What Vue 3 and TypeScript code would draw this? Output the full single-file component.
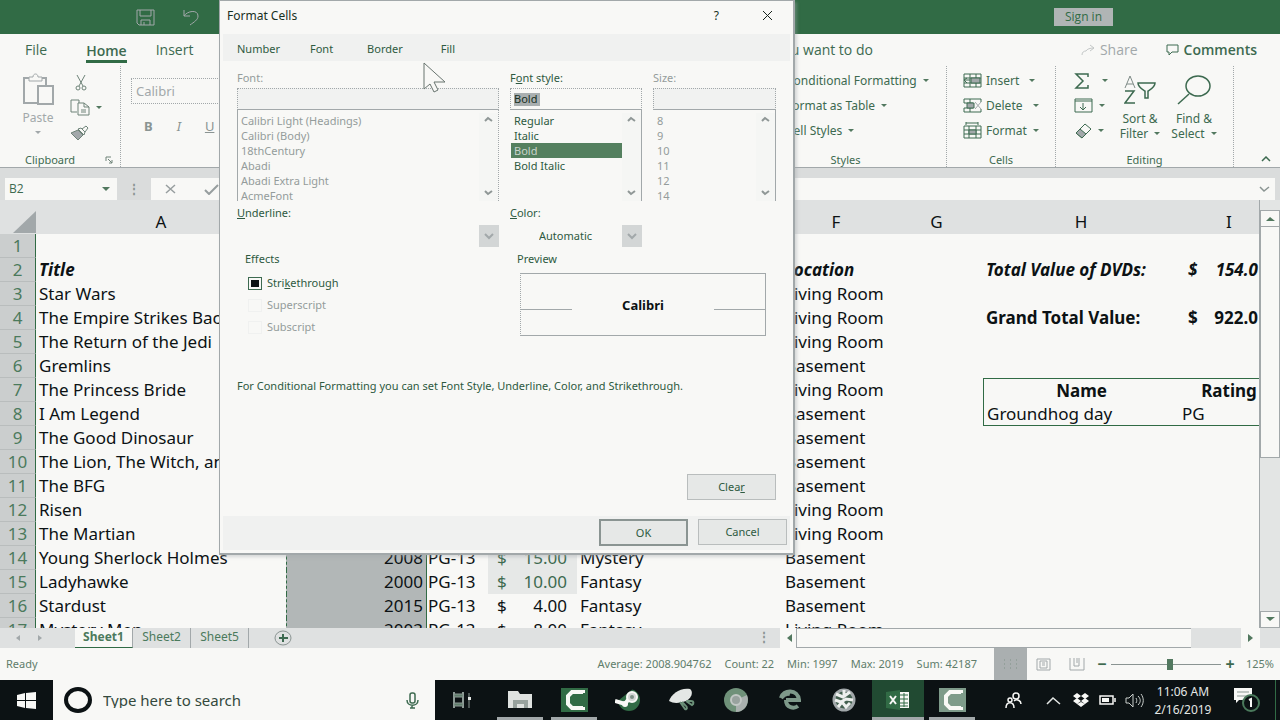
<script setup lang="ts">
import { ref, onMounted } from 'vue'

interface Row {
  n: number
  title?: string
  year?: string
  rating?: string
  price?: string
  genre?: string
  place?: string
  label?: string
  value?: string
  kind?: string
}

const columns = ['A', 'B', 'C', 'D', 'E', 'F', 'G', 'H', 'I']

const rows: Row[] = [
  { n: 1 },
  { n: 2, title: 'Title', place: 'Location', label: 'Total Value of DVDs:', value: '154.0', kind: 'head' },
  { n: 3, title: 'Star Wars', place: 'Living Room' },
  { n: 4, title: 'The Empire Strikes Back', place: 'Living Room', label: 'Grand Total Value:', value: '922.0', kind: 'total' },
  { n: 5, title: 'The Return of the Jedi', place: 'Living Room' },
  { n: 6, title: 'Gremlins', place: 'Basement' },
  { n: 7, title: 'The Princess Bride', place: 'Living Room', label: 'Name', kind: 'name' },
  { n: 8, title: 'I Am Legend', place: 'Basement', label: 'Groundhog day', kind: 'film' },
  { n: 9, title: 'The Good Dinosaur', place: 'Basement' },
  { n: 10, title: 'The Lion, The Witch, and', place: 'Basement' },
  { n: 11, title: 'The BFG', place: 'Basement' },
  { n: 12, title: 'Risen', place: 'Living Room' },
  { n: 13, title: 'The Martian', place: 'Living Room' },
  { n: 14, title: 'Young Sherlock Holmes', year: '2008', rating: 'PG-13', price: '15.00', genre: 'Mystery', place: 'Basement', kind: 'shade' },
  { n: 15, title: 'Ladyhawke', year: '2000', rating: 'PG-13', price: '10.00', genre: 'Fantasy', place: 'Basement', kind: 'shade' },
  { n: 16, title: 'Stardust', year: '2015', rating: 'PG-13', price: '4.00', genre: 'Fantasy', place: 'Basement' },
  { n: 17, title: 'Mystery Men', year: '2003', rating: 'PG-13', price: '8.00', genre: 'Fantasy', place: 'Living Room' },
]

const fonts = ['Calibri Light (Headings)', 'Calibri (Body)', '18thCentury', 'Abadi', 'Abadi Extra Light', 'AcmeFont']
const styles = ['Regular', 'Italic', 'Bold', 'Bold Italic']
const sizes = ['8', '9', '10', '11', '12', '14']
const dialogTabs = ['Number', 'Font', 'Border', 'Fill']
const stats = ['Average: 2008.904762', 'Count: 22', 'Min: 1997', 'Max: 2019', 'Sum: 42187']

const activeTab = ref('Font')
const style = ref('Bold')
const zoom = ref(54)
const strike = ref<HTMLInputElement | null>(null)

onMounted(() => {
  if (strike.value) strike.value.indeterminate = true
})
</script>

<template>
  <div class="screen">
    <header class="titlebar">
      <svg class="save" width="19" height="17" viewBox="0 0 19 17"><path d="M1 1h17v15H3l-2-2zM4 1v6h11V1M5 16v-5h9v5M8 13v3" /></svg>
      <svg class="undo" width="17" height="17" viewBox="0 0 17 17"><path d="M1 1v6h6M1 7c3-5 14-7 14 0 0 4-4 6-8 9" /></svg>
      <button class="signin" type="button">Sign in</button>
    </header>

    <nav class="tabs">
      <a href="#" class="t-file">File</a>
      <a href="#" class="t-home">Home</a>
      <a href="#" class="t-insert">Insert</a>
      <a href="#" class="t-tell">Tell me what you want to do</a>
      <button class="share" type="button">
        <svg width="14" height="12" viewBox="0 0 14 12"><path d="M1 11c0-3 2-4 4-4M9 1l4 3-4 3M5 7c1-2 4-3 8-3" /></svg>Share
      </button>
      <button class="comments" type="button">
        <svg width="13" height="12" viewBox="0 0 13 12"><path d="M1 1h11v7H6l-3 3V8H1z" /></svg>Comments
      </button>
    </nav>

    <section class="ribbon">
      <div class="group clip">
        <div class="body">
          <button class="paste" type="button">
            <svg width="32" height="32" viewBox="0 0 32 32"><path d="M7 5H2v25h13M20 5h4v7" stroke-width="2" /><path d="M7 8V4h4c0-4 5-4 5 0h4v4z" /><path d="M16 13h15v18H16z" stroke-width="2" fill="#f8f8f6" /></svg>
            <span>Paste</span>
            <i class="caret"></i>
          </button>
          <div class="stack">
            <button type="button" class="cut" aria-label="Cut"><svg width="14" height="17" viewBox="0 0 14 17"><path d="M3 1l6 11M11 1L5 12" /><circle cx="4" cy="14" r="2" /><circle cx="10" cy="14" r="2" /></svg></button>
            <button type="button" aria-label="Copy"><svg width="20" height="17" viewBox="0 0 20 17"><path d="M7 13H1V1h8v3" /><path d="M8 4h6l5 4v8H8zM14 4v4h5M11 11h5M11 13h5" /></svg><i class="caret"></i></button>
            <button type="button" aria-label="Format Painter"><svg width="19" height="16" viewBox="0 0 19 16"><path d="M1 8l7-3 5 5-5 5z" fill="#a2a8aa" /><path d="M8 4l6 6 1-3-4-4zM12 4l4-3 2 2-3 4" /></svg></button>
          </div>
        </div>
        <div class="caption">Clipboard<svg class="launch" width="8" height="8" viewBox="0 0 8 8"><path d="M1 5V1h5M3 3l4 4M7 4v3H4" /></svg></div>
      </div>

      <div class="group fontgroup">
        <input class="fontname" type="text" value="Calibri" aria-label="Font" />
        <div class="biu"><button type="button"><b>B</b></button><button type="button"><em>I</em></button><button type="button"><u>U</u></button></div>
      </div>

      <div class="group stylegroup">
        <div class="list">
          <button type="button">Conditional Formatting<i class="caret"></i></button>
          <button type="button">Format as Table<i class="caret"></i></button>
          <button type="button">Cell Styles<i class="caret"></i></button>
        </div>
        <div class="caption">Styles</div>
      </div>

      <div class="group cellgroup">
        <div class="list">
          <button type="button"><svg width="19" height="15" viewBox="0 0 19 15"><path d="M1 1h17v13H1zM1 5h17M1 10h17M7 1v13M13 1v13" /><path d="M8 5h9v5H8z" fill="#a2a8aa" /><path d="M7 7H1M4 5L1 7l3 3" /></svg>Insert<i class="caret wide"></i></button>
          <button type="button"><svg width="19" height="15" viewBox="0 0 19 15"><path d="M1 1h17M1 14h17M1 5h9M1 10h9M1 1v4M7 1v4M7 10v4M18 1v3M18 11v3M1 10v4" /><path d="M4 5h7v5H4z" fill="#a2a8aa" /><path d="M12 4l6 7M18 4l-6 7" stroke="#a2a8aa" /></svg>Delete<i class="caret wide"></i></button>
          <button type="button"><svg width="19" height="17" viewBox="0 0 19 17"><path d="M1 4h17v12H1zM1 8h17M1 12h17M6 4v12M13 4v12M3 1h12M3 0v3M15 0v3" /><path d="M6 8h7v4H6z" fill="#a2a8aa" /></svg>Format<i class="caret"></i></button>
        </div>
        <div class="caption">Cells</div>
      </div>

      <div class="group editgroup">
        <div class="body">
          <div class="stack">
            <button type="button" aria-label="AutoSum"><svg width="18" height="16" viewBox="0 0 18 16"><path d="M14 4V1H2l7 7-7 7h12v-3" stroke-width="1.500" /></svg><i class="caret wide"></i></button>
            <button type="button" aria-label="Fill"><svg width="19" height="15" viewBox="0 0 19 15"><path d="M1 1h17v13H1zM1 3h17M9 5v7M6 9l3 3 3-3" /></svg><i class="caret"></i></button>
            <button type="button" aria-label="Clear"><svg width="18" height="16" viewBox="0 0 18 16"><path d="M11 1l6 5-9 9-6-5z" /><path d="M6 6l6 5-4 4-6-5z" fill="#a2a8aa" /></svg><i class="caret"></i></button>
          </div>
          <button class="big" type="button">
            <svg width="32" height="30" viewBox="0 0 32 30"><path d="M1 13L6 1l5 12M3 9h6" stroke="#7f8b87" /><path d="M1 16h9L1 28h10" stroke-width="1.500" /><path d="M14 8h17c0 4-4 6-7 8v7h-3v-7c-3-2-7-4-7-8z" stroke-width="1.500" /></svg>
            <span>Sort &amp;</span><span>Filter<i class="caret"></i></span>
          </button>
          <button class="big" type="button">
            <svg width="34" height="30" viewBox="0 0 34 30"><ellipse cx="21" cy="11" rx="12" ry="10" stroke-width="1.500" /><path d="M12 19L1 29" stroke-width="1.500" /></svg>
            <span>Find &amp;</span><span>Select<i class="caret"></i></span>
          </button>
        </div>
        <div class="caption">Editing</div>
      </div>
      <button class="collapse" type="button" aria-label="Collapse ribbon"><svg width="10" height="6" viewBox="0 0 10 6"><path d="M1 5l4-4 4 4" stroke-width="1.500" /></svg></button>
    </section>

    <section class="formula">
      <div class="namebox"><input type="text" value="B2" aria-label="Name box" /><i class="caret big-caret"></i></div>
      <span class="grip">⋮</span>
      <div class="fx">
        <svg width="11" height="10" viewBox="0 0 11 10"><path d="M1 1l9 8M10 1L1 9" stroke="#979e9f" stroke-width="1.500" /></svg>
        <svg width="15" height="11" viewBox="0 0 15 11"><path d="M1 6l4 4 9-9" stroke="#979e9f" stroke-width="2" /></svg>
        <input type="text" aria-label="Formula" />
        <svg width="11" height="7" viewBox="0 0 11 7"><path d="M1 1l4 4 5-4" stroke="#8a9492" stroke-width="1.500" /></svg>
      </div>
    </section>

    <main class="sheet">
      <div class="gridwrap">
        <table class="grid">
          <colgroup>
            <col class="c-n" /><col class="c-a" /><col class="c-b" /><col class="c-c" /><col class="c-d" /><col class="c-e" /><col class="c-f" /><col class="c-g" /><col class="c-h" /><col class="c-i" />
          </colgroup>
          <thead>
            <tr><th><svg width="23" height="22" viewBox="0 0 23 22"><path d="M23 0v22H0z" fill="#a2a8aa" stroke="none" /></svg></th><th v-for="c in columns" :key="c">{{ c }}</th></tr>
          </thead>
          <tbody>
            <tr v-for="r in rows" :key="r.n" :class="r.kind">
              <th>{{ r.n }}</th>
              <td>{{ r.title }}</td>
              <td class="sel">{{ r.year }}</td>
              <td>{{ r.rating }}</td>
              <td class="price"><div v-if="r.price"><span>$</span><span>{{ r.price }}</span></div></td>
              <td>{{ r.genre }}</td>
              <td>{{ r.place }}</td>
              <td></td>
              <td class="h">{{ r.label }}</td>
              <td class="i"><div v-if="r.value"><span>$</span><span>{{ r.value }}</span></div><template v-if="r.kind === 'name'">Rating</template><template v-if="r.kind === 'film'">PG</template></td>
            </tr>
          </tbody>
        </table>
      </div>
      <div class="vscroll">
        <button type="button" aria-label="Scroll up"><svg width="9" height="5" viewBox="0 0 9 5"><path d="M0 5l4-4 5 4z" fill="#52785f" stroke="none" /></svg></button>
        <div class="thumb"></div>
        <div class="track"></div>
        <button type="button" aria-label="Scroll down"><svg width="9" height="5" viewBox="0 0 9 5"><path d="M0 0h9L4 4z" fill="#52785f" stroke="none" /></svg></button>
      </div>
    </main>

    <div class="sheetbar">
      <span class="arrows"><svg width="5" height="6" viewBox="0 0 5 6"><path d="M4 0v6L0 3z" fill="#a2a8aa" stroke="none" /></svg><svg width="5" height="6" viewBox="0 0 5 6"><path d="M0 0v6l4-3z" fill="#a2a8aa" stroke="none" /></svg></span>
      <a href="#" class="on">Sheet1</a><a href="#">Sheet2</a><a href="#">Sheet5</a>
      <button class="add" type="button" aria-label="New sheet"><svg width="19" height="17" viewBox="0 0 19 17"><ellipse cx="9" cy="8" rx="8" ry="7" stroke="#8a9492" /><path d="M5 8h9M9 4v8" stroke-width="2" /></svg></button>
      <span class="dots">⋮</span>
      <div class="hscroll">
        <svg width="5" height="8" viewBox="0 0 5 8"><path d="M5 0v8L0 4z" fill="#52785f" stroke="none" /></svg>
        <div class="hthumb"></div><div class="htrack"></div>
        <svg width="5" height="8" viewBox="0 0 5 8"><path d="M0 0v8l5-4z" fill="#52785f" stroke="none" /></svg>
      </div>
    </div>

    <footer class="status">
      <span class="ready">Ready</span>
      <span v-for="s in stats" :key="s" class="stat">{{ s }}</span>
      <button class="view current" type="button" aria-label="Normal"><svg width="15" height="11" viewBox="0 0 15 11"><path d="M1 1h13M1 5h13M1 9h13" stroke="#7f9186" stroke-dasharray="1 5" /></svg></button>
      <button class="view" type="button" aria-label="Page layout"><svg width="15" height="13" viewBox="0 0 15 13"><path d="M1 1h13v11H1zM4 3h7v7H4zM6 5h3M6 7h3" /></svg></button>
      <button class="view" type="button" aria-label="Page break"><svg width="16" height="13" viewBox="0 0 16 13"><path d="M1 0v12h14V0M5 0v8h5V0M8 0v5" /></svg></button>
      <span class="pm minus">−</span>
      <input v-model="zoom" class="zoom" type="range" min="0" max="100" aria-label="Zoom" />
      <span class="pm">+</span>
      <span class="pct">125%</span>
    </footer>

    <footer class="taskbar">
      <button class="start" type="button" aria-label="Start"><svg width="19" height="17" viewBox="0 0 19 17"><path d="M0 3l8-2v7H0zM9 1l10-1v8H9zM0 9h8v7l-8-2zM9 9h10v8L9 16z" fill="#f8f8f6" stroke="none" /></svg></button>
      <label class="search">
        <svg width="28" height="26" viewBox="0 0 28 26"><ellipse cx="14" cy="13" rx="12" ry="11" stroke="#0c1214" stroke-width="4" /></svg>
        <input type="text" placeholder="Type here to search" />
        <svg width="13" height="17" viewBox="0 0 13 17"><rect x="4" y="1" width="5" height="10" rx="2" stroke-width="1.500" /><path d="M1 8c0 7 11 7 11 0M6 13v3M4 16h5" stroke-width="1.500" /></svg>
      </label>
      <div class="app first"><svg width="20" height="16" viewBox="0 0 20 16"><path d="M2 0v16M11 0v16" stroke="#8d9a95" stroke-width="2" /><path d="M2 2h9v3H2zM2 11h9v3H2z" fill="#5f7d6b" stroke="#8d9a95" /><path d="M17 1v15" stroke="#8d9a95" /><path d="M16 5h3v3h-3z" fill="#e4e7e5" stroke="none" /></svg></div>
      <div class="app run"><svg width="25" height="20" viewBox="0 0 25 20"><path d="M0 1h10l2 3h12v14H0z" fill="#dfe2e0" stroke="none" /><path d="M5 18v-8h15v8h-4v-4H9v4z" fill="#98a29e" stroke="none" /></svg></div>
      <div class="app run"><svg width="27" height="24" viewBox="0 0 27 24"><path d="M0 0h27v24H0z" fill="#316b45" stroke="none" /><path d="M22 5V4H11L7 8v8l4 4h11v-1" stroke="#f8f8f6" stroke-width="4" /></svg></div>
      <div class="app"><svg width="26" height="24" viewBox="0 0 26 24"><circle cx="14" cy="12" r="11" fill="#316b45" stroke="none" /><path d="M0 0h19L4 12H0z" fill="#0c1214" stroke="none" /><path d="M0 13l10 3 6-8" stroke="#f8f8f6" stroke-width="4" /><circle cx="17" cy="9" r="5" fill="#d2d6d4" stroke="#f8f8f6" stroke-width="2" /><circle cx="17" cy="9" r="2" fill="#7b8f85" stroke="none" /><circle cx="10" cy="16" r="3" fill="#f8f8f6" stroke="none" /></svg></div>
      <div class="app"><svg width="26" height="24" viewBox="0 0 26 24"><path d="M0 13C2 6 12-1 21 1c4 3 1 10-4 12-6 2-12 3-17 0z" fill="#e4e7e5" stroke="none" /><path d="M11 14l5 7c2 1 3-2 0-4l-3-3M17 13l6 4c2-1 2-4-1-4h-4" stroke="#6c9179" stroke-width="2" /></svg></div>
      <div class="app"><svg width="26" height="24" viewBox="0 0 26 24"><circle cx="13" cy="12" r="12" fill="#6f9179" stroke="none" /><path d="M13 12l11-5c3 8-2 17-11 17z" fill="#a9b0ae" stroke="none" /><circle cx="13" cy="12" r="5" fill="#98a29e" stroke="#c2c8c5" stroke-width="2" /></svg></div>
      <div class="app"><svg width="22" height="22" viewBox="0 0 22 22"><path d="M2 9c2-9 17-9 18 2H7M2 9c3-4 6-5 9-4M7 11c0 8 8 9 12 6" stroke="#7e998a" stroke-width="4" /></svg></div>
      <div class="app"><svg width="26" height="24" viewBox="0 0 26 24"><circle cx="13" cy="12" r="10" fill="#43604f" stroke="#a2a8aa" stroke-width="3" /><path d="M5 6l7 3 7-5M4 12l6 2 5-3 7 1M7 19l4-5 4 5 4-4M13 2v5" stroke="#eef0ee" stroke-width="3" /></svg></div>
      <div class="app run hot"><svg width="25" height="20" viewBox="0 0 25 20"><path d="M12 2h11v16H12z" fill="#f8f8f6" stroke="none" /><path d="M14 5h8M14 9h8M14 13h8M14 16h8M18 3v14" stroke="#316b45" /><path d="M0 2l14-2v20L0 18z" fill="#316b45" stroke="none" /><path d="M4 6l6 8M10 6l-6 8" stroke="#f8f8f6" stroke-width="2" /></svg></div>
      <div class="app run"><svg width="27" height="24" viewBox="0 0 27 24"><path d="M0 0h27v24H0z" fill="#7e9b8a" stroke="none" /><path d="M22 5V4H11L7 8v8l4 4h11v-1" stroke="#f8f8f6" stroke-width="4" /></svg></div>

      <div class="tray">
        <span class="people"><svg width="17" height="17" viewBox="0 0 17 17"><g stroke="#f8f8f6" stroke-width="1.500"><circle cx="5" cy="8" r="2" /><circle cx="11" cy="4" r="3" /><path d="M1 16c0-7 8-7 8 0M9 9c3-3 7 0 7 3" /></g></svg></span>
        <span><svg width="15" height="9" viewBox="0 0 15 9"><path d="M1 8l6-6 7 6" stroke="#e4e7e5" stroke-width="1.500" /></svg></span>
        <span><svg width="16" height="14" viewBox="0 0 16 14"><path d="M4 0l4 3-4 3-4-3zM12 0l4 3-4 3-4-3zM4 5l4 3-4 3-4-3zM12 5l4 3-4 3-4-3zM8 9l4 2-4 3-4-3z" fill="#f8f8f6" stroke="none" /></svg></span>
        <span><svg width="17" height="10" viewBox="0 0 17 10"><path d="M1 1h13v8H1zM16 3v4" stroke="#f8f8f6" stroke-width="1.500" /><path d="M3 3h7v4H3z" fill="#f8f8f6" stroke="none" /></svg></span>
        <span><svg width="19" height="15" viewBox="0 0 19 15"><path d="M1 5h3l4-4v13l-4-4H1zM11 5c1 2 1 3 0 5M13 3c3 3 3 6 0 9M16 1c3 4 3 9 0 13" stroke="#c9cecb" /></svg></span>
      </div>
      <div class="clock"><span>11:06 AM</span><span>2/16/2019</span></div>
      <div class="notify"><svg width="28" height="26" viewBox="0 0 28 26"><path d="M1 1h18v12H6l-3 3v-3H1z" fill="#f8f8f6" stroke="none" /><path d="M4 5h12M4 9h12" stroke="#8b9792" /><circle cx="18" cy="16" r="8" fill="#0c1214" stroke="#4a795b" stroke-width="2" /><path d="M16 13l2-1v8" stroke="#f8f8f6" stroke-width="2" /></svg></div>
    </footer>

    <div class="dialog" role="dialog" aria-label="Format Cells">
      <div class="dtitle"><span>Format Cells</span><button type="button">?</button><button type="button" aria-label="Close"><svg width="11" height="11" viewBox="0 0 11 11"><path d="M1 1l9 9M10 1l-9 9" stroke="#18241d" /></svg></button></div>
      <div class="dtabs"><button v-for="t in dialogTabs" :key="t" type="button" :class="{ on: t === activeTab }" @click="activeTab = t">{{ t }}</button></div>
      <div class="panel">
        <div class="pickers">
          <div class="pick off">
            <label for="f-font">Font:</label>
            <div class="field shaded"><input id="f-font" type="text" disabled /></div>
            <div class="listbox fonts"><ul><li v-for="f in fonts" :key="f">{{ f }}</li></ul><div class="lscroll"><svg width="9" height="6" viewBox="0 0 9 6"><path d="M1 5l3-3 4 3" /></svg><svg width="9" height="6" viewBox="0 0 9 6"><path d="M1 1l3 3 4-3" /></svg></div></div>
          </div>
          <div class="pick">
            <label for="f-style">F<u>o</u>nt style:</label>
            <div class="field"><input id="f-style" v-model="style" class="picked" type="text" /></div>
            <div class="listbox"><ul><li v-for="s in styles" :key="s" :class="{ on: s === style }" @click="style = s">{{ s }}</li></ul><div class="lscroll"><svg width="9" height="6" viewBox="0 0 9 6"><path d="M1 5l3-3 4 3" /></svg><svg width="9" height="6" viewBox="0 0 9 6"><path d="M1 1l3 3 4-3" /></svg></div></div>
          </div>
          <div class="pick off">
            <label for="f-size">Size:</label>
            <div class="field shaded"><input id="f-size" type="text" disabled /></div>
            <div class="listbox"><ul><li v-for="s in sizes" :key="s">{{ s }}</li></ul><div class="lscroll"><svg width="9" height="6" viewBox="0 0 9 6"><path d="M1 5l3-3 4 3" /></svg><svg width="9" height="6" viewBox="0 0 9 6"><path d="M1 1l3 3 4-3" /></svg></div></div>
          </div>
        </div>

        <div class="combos">
          <div class="combo">
            <label for="f-under"><u>U</u>nderline:</label>
            <div class="drop"><select id="f-under"><option></option></select><svg width="20" height="22" viewBox="0 0 20 22"><path d="M6 9l4 4 4-4" /></svg></div>
          </div>
          <div class="combo">
            <label for="f-color"><u>C</u>olor:</label>
            <div class="drop"><select id="f-color"><option>Automatic</option></select><svg width="20" height="22" viewBox="0 0 20 22"><path d="M6 9l4 4 4-4" /></svg></div>
          </div>
        </div>

        <div class="lower">
          <fieldset class="effects">
            <legend>Effects</legend>
            <label><input ref="strike" type="checkbox" /><span>Stri<u>k</u>ethrough</span></label>
            <label class="off"><input type="checkbox" disabled /><span>Superscript</span></label>
            <label class="off"><input type="checkbox" disabled /><span>Subscript</span></label>
          </fieldset>
          <div class="preview">
            <span>Preview</span>
            <div class="pbox"><i></i><b>Calibri</b><i></i></div>
          </div>
        </div>

        <p class="note">For Conditional Formatting you can set Font Style, Underline, Color, and Strikethrough.</p>
        <button class="btn clear" type="button"><span>Clea<u>r</u></span></button>
      </div>
      <div class="dfoot"><button class="btn ok" type="button">OK</button><button class="btn" type="button">Cancel</button></div>
    </div>

    <svg class="cursor" width="24" height="32" viewBox="0 0 24 32"><path d="M1 1v26l6-5 4 8 4-2-4-8h11z" fill="#f8f8f6" stroke="#68746f" /></svg>
  </div>
</template>

<style>
body { background: #f8f8f6; overflow: hidden; }
</style>

<style scoped>
* { box-sizing: border-box; }
.screen { position: relative; display: flex; flex-direction: column; height: 100vh; overflow: hidden; font: 13px/16px "Open Sans", "Noto Sans", sans-serif; color: #3d6a50; background: #f8f8f6; }
button { font: inherit; color: inherit; background: none; border: 0; padding: 0; display: flex; align-items: center; }
input, select { font: inherit; color: inherit; border: 0; background: none; padding: 0; min-width: 0; outline: 0; }
a { color: inherit; text-decoration: none; }
svg { fill: none; stroke: #3d6a50; flex: none; }
.caret { border: 3px solid transparent; border-top-color: #52785f; border-bottom: 0; margin-left: 6px; flex: none; }
.caret.wide { margin-left: 10px; }

.titlebar { flex: none; height: 34px; display: flex; align-items: center; background: #316b45; padding: 0 167px 0 136px; }
.titlebar svg { stroke: #a2a8aa; }
.undo { margin-left: 28px; }
.signin { margin-left: auto; width: 59px; height: 18px; justify-content: center; background: #b0b5b5; color: #316b45; font-size: 12px; }

.tabs { flex: none; height: 32px; display: flex; align-items: center; font-size: 14px; padding: 0 23px 0 25px; }
.t-home { margin-left: 39px; font-weight: 600; height: 26px; line-height: 28px; border-bottom: 3px solid #316b45; }
.t-home, .t-file, .t-insert { flex: none; }
.t-insert { margin-left: 29px; }
.t-tell { margin-left: auto; margin-right: 208px; }
.share { color: #a2a8aa; gap: 5px; }
.share svg { stroke: #c3c7c7; }
.comments { margin-left: 28px; gap: 5px; font-weight: 600; }

.ribbon { flex: none; height: 102px; display: flex; border-bottom: 1px solid #a2a8aa; font-family: "Noto Sans", "Open Sans", sans-serif; font-size: 12px; }
.group { display: flex; flex-direction: column; border-right: 1px dotted #a2a8aa; }
.caption { margin-top: auto; height: 14px; line-height: 14px; font-size: 11px; text-align: center; }
.body { display: flex; }
.list button, .stack button { height: 25px; }
.clip { width: 121px; flex: none; }
.clip .caption { display: flex; align-items: center; padding: 0 7px 0 25px; justify-content: space-between; }
.clip svg { stroke: #6e8378; }
.paste { width: 70px; padding: 7px 0 0 6px; flex-direction: column; gap: 5px; color: #a2a8aa; }
.paste svg { stroke: #a2a8aa; }
.paste .caret { border-top-color: #a2a8aa; margin: 0; }
.stack { padding-top: 4px; }
.cut { padding-left: 4px; }
.fontgroup { flex: 1; border: 0; padding: 12px 0 0 10px; gap: 13px; }
.fontname { width: 145px; height: 26px; border: 1px dotted #a2a8aa; padding-left: 4px; color: #a2a8aa; font-size: 13px; }
.biu { display: flex; gap: 24px; padding-left: 13px; font-size: 13px; line-height: 18px; color: #8a9492; }
.stylegroup { width: 202px; padding-top: 2px; }
.stylegroup .list { padding-left: 41px; }
.cellgroup { width: 109px; padding-top: 2px; }
.cellgroup .list { padding-left: 16px; }
.cellgroup .list svg { margin-right: 4px; }
.editgroup { width: 178px; padding-top: 2px; }
.editgroup .stack { padding: 0 0 0 18px; width: 57px; }
.big { width: 54px; flex-direction: column; padding-top: 7px; }
.big svg { margin-bottom: 6px; }
.big span { line-height: 15px; display: flex; align-items: center; }
.collapse { width: 46px; align-items: flex-end; justify-content: center; padding: 0 0 5px 18px; }

.formula { flex: none; height: 32px; display: flex; align-items: flex-end; padding: 0 5px; background: #dadcdc; font-size: 12px; }
.namebox { width: 112px; height: 22px; display: flex; align-items: center; background: #f8f8f6; padding: 0 7px 0 4px; }
.namebox input { flex: 1; }
.big-caret { border-width: 4px; border-bottom: 0; }
.grip, .dots { width: 34px; text-align: center; line-height: 22px; color: #8a9492; font-weight: 700; }
.fx { flex: 1; height: 22px; display: flex; align-items: center; background: #f8f8f6; padding: 0 5px 0 14px; gap: 28px; }
.fx input { flex: 1; }

.sheet { flex: 1; min-height: 0; display: flex; background: #e3e5e4; }
.gridwrap { flex: 1; min-width: 0; overflow: hidden; border-right: 1px solid #a2a8aa; }
.grid { table-layout: fixed; border-collapse: separate; border-spacing: 0; width: 1279px; font: 17px/24px "Noto Sans", "Open Sans", sans-serif; color: #0c1214; background: #f8f8f6; }
.c-n { width: 36px; } .c-a { width: 250px; } .c-b { width: 141px; } .c-c { width: 61px; } .c-d { width: 89px; }
.c-e { width: 205px; } .c-f { width: 108px; } .c-g { width: 93px; } .c-h { width: 196px; } .c-i { width: 100px; }
.grid th, .grid td { padding: 0 3px; height: 24px; white-space: nowrap; overflow: hidden; }
.grid thead th { height: 34px; padding-top: 10px; font-weight: 400; background: #dfe1e1; }
.grid thead th:first-child { padding: 0; text-align: right; vertical-align: bottom; }
.grid thead svg { display: block; margin: 0 0 1px auto; }
.grid tbody th { background: #cbcece; color: #4b7a5c; font-weight: 400; border-right: 1px solid #316b45; border-bottom: 1px solid #b9bdbd; line-height: 23px; }
.grid .sel { background: #b2b7b7; text-align: right; border-left: 1px dashed #316b45; border-right: 1px solid #316b45; }
.grid td:nth-child(4) { padding-left: 1px; }
.grid .price { padding: 0 10px 0 9px; }
.price div, .i div { display: flex; justify-content: space-between; }
.i div { padding: 0 18px 0 6px; }
.shade .price { color: #3d6a50; background: #e6e8e7; }
.head { font-weight: 700; font-style: italic; }
.total .h, .total .i, .name .h, .name .i { font-weight: 700; }
.head th { font-style: normal; }
.grid .name .h { text-align: center; border-top: 1px solid #316b45; border-left: 1px solid #316b45; line-height: 23px; }
.grid .name .i { text-align: center; border-top: 1px solid #316b45; line-height: 23px; }
.grid .film .h { border-left: 1px solid #316b45; border-bottom: 1px solid #316b45; line-height: 23px; }
.grid .film .i { border-bottom: 1px solid #316b45; line-height: 23px; }
.vscroll { width: 20px; padding-top: 10px; display: flex; flex-direction: column; }
.vscroll button { height: 17px; justify-content: center; background: #f8f8f6; border: 1px solid #a2a8aa; }
.thumb { flex: 6; background: #f8f8f6; border: 1px solid #a2a8aa; border-top: 0; }
.track { flex: 4; }

.sheetbar { flex: none; height: 20px; display: flex; align-items: stretch; background: #dfe1e1; line-height: 18px; font-family: "Noto Sans", "Open Sans", sans-serif; font-size: 12px; color: #4b7a5c; }
.arrows { width: 75px; display: flex; align-items: center; gap: 17px; padding-left: 16px; }
.sheetbar a { width: 58px; text-align: center; border-right: 1px solid #a2a8aa; }
.sheetbar .on { font-weight: 700; background: #f8f8f6; border-bottom: 1px solid #316b45; }
.add { margin-left: 25px; }
.dots { margin-left: auto; width: 20px; line-height: 18px; }
.hscroll { width: 480px; margin: 0 20px 0 6px; display: flex; align-items: center; background: #f8f8f6; padding: 0 7px; }
.hscroll svg { margin: 0 4px 0 0; }
.hthumb { flex: 1; height: 20px; border: 1px solid #a2a8aa; border-width: 1px 0 1px 1px; }
.htrack { width: 50px; height: 20px; background: #dfe1e1; margin-right: 7px; }
.hscroll svg:last-child { margin: 0; }

.status { flex: none; height: 32px; display: flex; align-items: center; font-family: "Noto Sans", "Open Sans", sans-serif; font-size: 11px; padding: 0 6px; color: #5f7d6b; }
.ready { margin-right: auto; }
.stat { margin-right: 13px; }
.view { width: 33px; height: 32px; justify-content: center; }
.view svg { stroke: #a2a8aa; }
.view.current { background: #aaafb0; margin-left: 4px; }
.pm { width: 18px; text-align: center; font-size: 16px; font-weight: 700; color: #3d6a50; }
.zoom { appearance: none; width: 110px; height: 12px; margin: 0; background: linear-gradient(#8a9492, #8a9492) center / 100% 1px no-repeat; }
.zoom::-webkit-slider-thumb { appearance: none; width: 6px; height: 11px; background: #52785f; }
.pct { width: 35px; text-align: right; }

.taskbar { flex: none; height: 40px; display: flex; background: #0c1214; }
.start { width: 53px; justify-content: center; }
.search { width: 382px; display: flex; align-items: center; background: #f8f8f6; padding: 0 16px 0 11px; font-family: "Noto Sans", "Open Sans", sans-serif; font-size: 15px; }
.search input { flex: 1; margin-left: 11px; }
.search input::placeholder { color: #34493d; opacity: 1; }
.app { width: 54px; display: flex; align-items: center; justify-content: center; border: 0 solid #0c1214; border-width: 0 4px; }
.app.first { margin-right: 4px; }
.app.run { box-shadow: inset 0 -3px #a2a8aa; }
.app.hot { background: #214a32; border-width: 0 1px; }
.tray { margin-left: auto; display: flex; }
.tray span { width: 27px; display: flex; align-items: center; justify-content: center; }
.tray .people { width: 40px; margin-right: 7px; }
.clock { width: 70px; display: flex; flex-direction: column; align-items: center; font-family: "Noto Sans", "Open Sans", sans-serif; font-size: 12px; line-height: 18px; padding-top: 3px; color: #e4e7e5; white-space: nowrap; }
.notify { width: 58px; margin-right: 4px; border-right: 1px solid #316b45; display: flex; align-items: center; justify-content: center; }

.dialog { position: absolute; left: 219px; top: 0; width: 576px; display: flex; flex-direction: column; background: #f8f8f6; border: 1px solid #a2a8aa; border-width: 1px 2px 2px 1px; font-family: "Noto Sans", "Open Sans", sans-serif; font-size: 11px; line-height: 14px; color: #2e5a41; box-shadow: 2px 2px 3px #a2a8aa66; }
.dtitle { height: 33px; display: flex; align-items: center; padding: 0 20px 4px 7px; font-size: 12px; color: #18301f; }
.dtitle span { margin-right: auto; }
.dtitle button + button { margin-left: 43px; }
.dtabs { height: 27px; display: flex; align-items: center; background: #f0f1f0; margin: 0 3px; padding: 3px 0 0 14px; }
.dtabs button { margin-right: 34px; }
.dtabs button:nth-child(2) { margin-left: -4px; }
.dtabs button:nth-child(3) { margin-right: 38px; }
.panel { display: flex; flex-direction: column; padding: 10px 17px 0 17px; }
.pickers { display: grid; grid-template-columns: 262px 132px minmax(0, 1fr); gap: 11px; }
.pick { display: flex; flex-direction: column; min-width: 0; }
.off { color: #949c9b; }
.field { height: 22px; margin-top: 3px; display: flex; align-items: center; border: 1px dotted #a2a8aa; border-bottom: 1px solid #a2a8aa; padding: 0 3px; }
.field input { flex: 1; }
.field.shaded { background: #f1f2f1; }
.field .picked { flex: none; width: 26px; height: 13px; background: #a9afb0; color: #18301f; }
.listbox { height: 91px; display: flex; border: 1px solid #a2a8aa; border-width: 0 1px; border-left-color: transparent; padding-top: 3px; }
.listbox.fonts { border-left-color: #a2a8aa; border-right-style: dotted; }
.listbox ul { flex: 1; list-style: none; margin: 0; padding: 0; }
.listbox li { line-height: 15px; padding-left: 3px; }
.listbox .on { background: #54805f; color: #c9d3cc; }
.lscroll { width: 19px; display: flex; flex-direction: column; align-items: center; justify-content: space-between; padding: 3px 0 5px; background: #f5f6f4; }
.lscroll svg { stroke: #8f9796; stroke-width: 2; }
.combos { display: grid; grid-template-columns: 262px 132px; gap: 11px; margin-top: 5px; }
.combo label { display: block; }
.drop { display: flex; margin-top: 5px; height: 22px; position: relative; }
.drop select { appearance: none; flex: 1; padding-left: 29px; }
.drop svg { position: absolute; right: 0; background: #d3d6d6; stroke: #a2a8aa; stroke-width: 2; pointer-events: none; }
.lower { display: grid; grid-template-columns: 275px 1fr; margin-top: 5px; }
.effects { border: 0; margin: 0; padding: 0 0 0 8px; }
.effects legend { padding: 0; margin-bottom: 6px; }
.effects label { display: flex; align-items: center; height: 22px; gap: 5px; padding-left: 3px; }
.effects input { appearance: none; width: 14px; height: 13px; margin: 0; border: 1px solid #f0f1f0; }
.effects input:indeterminate { border-color: #3d6a50; background: linear-gradient(#0c1214, #0c1214) center / 8px 7px no-repeat; }
.preview > span { display: block; padding-left: 5px; }
.pbox { height: 63px; margin: 7px 10px 0 8px; border: 1px solid #a2a8aa; border-left-style: dotted; display: flex; align-items: center; justify-content: space-between; font-size: 13px; color: #0c1214; }
.pbox i { width: 51px; height: 1px; background: #a2a8aa; margin-top: 10px; }
.note { margin: 41px 0 0; }
.btn { width: 89px; height: 26px; justify-content: center; background: #e6e8e7; border: 1px solid #b9bdbd; }
.clear { margin: 81px 0 0 auto; }
.dfoot { display: flex; justify-content: flex-end; gap: 10px; margin: 16px 3px 3px; padding: 3px 3px 4px; background: #f0f1f0; }
.ok { height: 27px; border: 2px solid #8a9492; }
.cursor { position: absolute; left: 423px; top: 62px; }
</style>
